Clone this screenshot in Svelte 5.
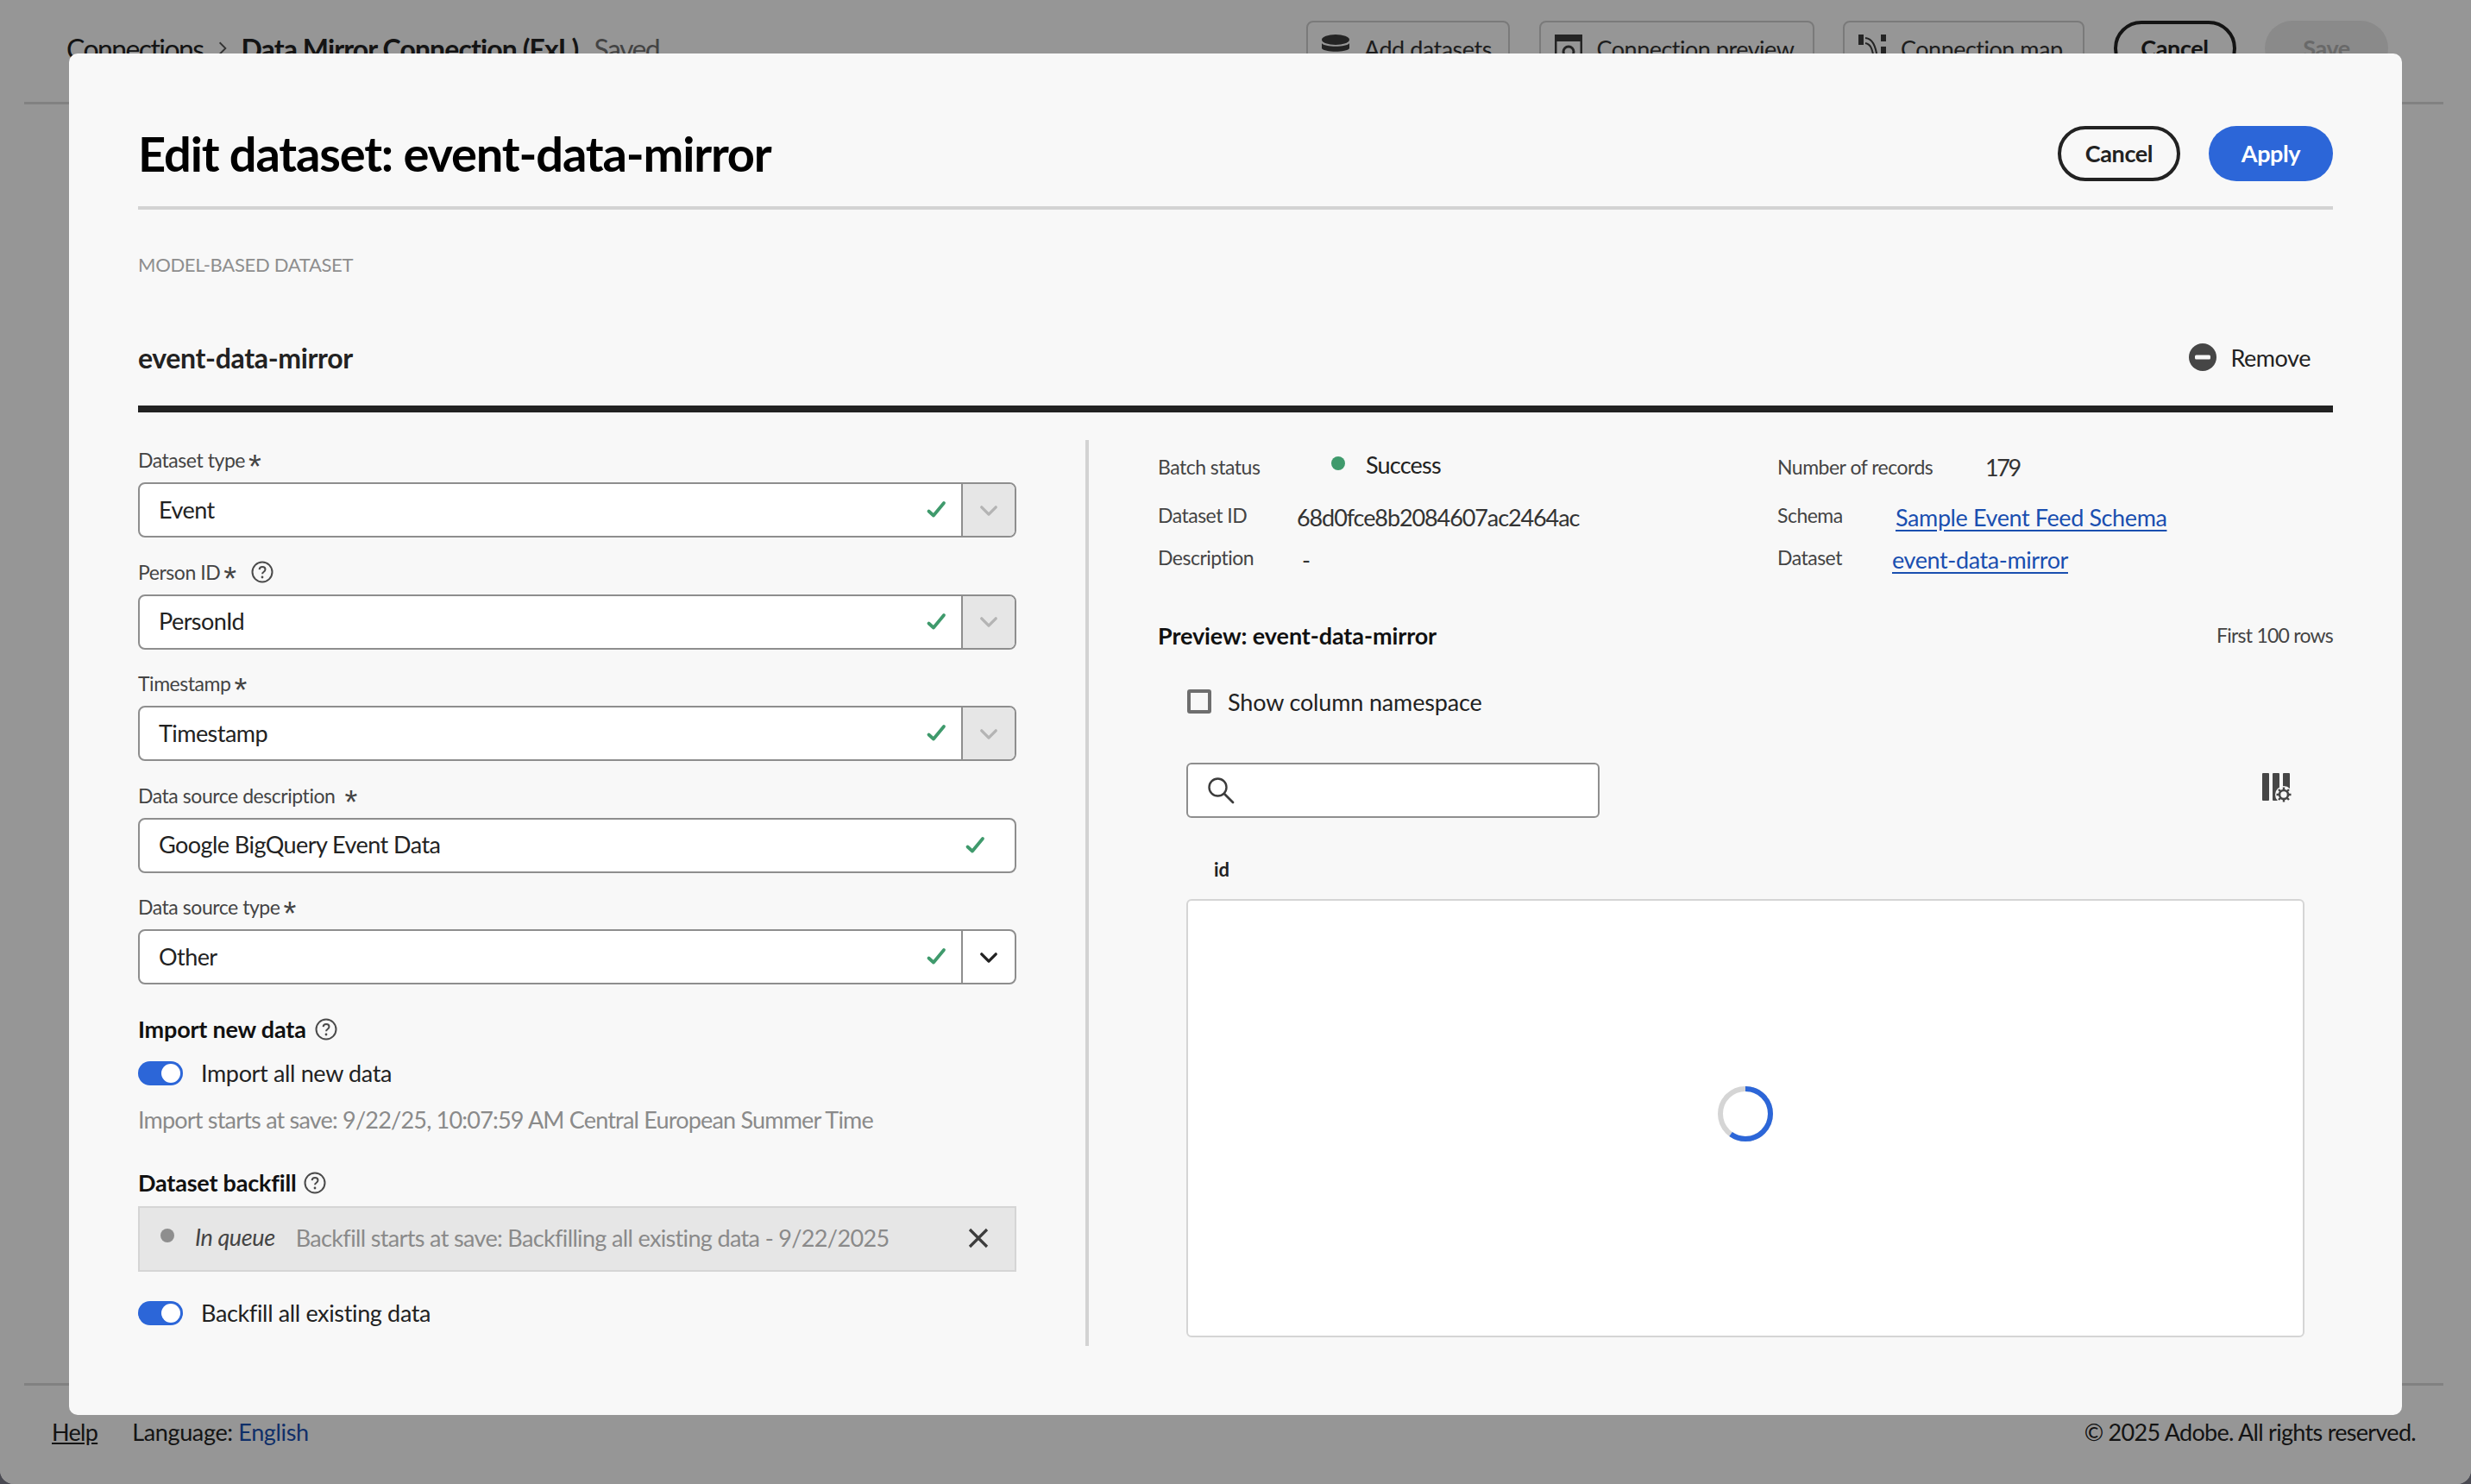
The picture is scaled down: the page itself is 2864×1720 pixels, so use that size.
<script>
	const fields = [
		{ label: 'Dataset type', value: 'Event', kind: 'locked' },
		{ label: 'Person ID', value: 'PersonId', kind: 'locked', help: true },
		{ label: 'Timestamp', value: 'Timestamp', kind: 'locked' },
		{ label: 'Data source description', value: 'Google BigQuery Event Data', kind: 'text', wide: true },
		{ label: 'Data source type', value: 'Other', kind: 'open' }
	];
</script>

{#snippet helpIcon()}
	<svg class="help" viewBox="0 0 26 26" aria-hidden="true">
		<circle cx="13" cy="13" r="11.5" fill="none" stroke="#4b4b4b" stroke-width="2" />
		<path d="M9.6 10.2c.2-2 1.6-3.1 3.5-3.1 2 0 3.4 1.2 3.4 2.9 0 1.5-.9 2.2-2 3-.9.6-1.4 1.1-1.4 2.2" fill="none" stroke="#4b4b4b" stroke-width="2" />
		<circle cx="13" cy="19" r="1.4" fill="#4b4b4b" />
	</svg>
{/snippet}

{#snippet check()}
	<svg class="check" viewBox="0 0 24 24" aria-hidden="true">
		<path d="M3.5 13.5 9 18.5 21 4" fill="none" stroke="#3f9a6c" stroke-width="3.8" stroke-linecap="round" stroke-linejoin="round" />
	</svg>
{/snippet}

{#snippet chevron()}
	<svg class="chevron" viewBox="0 0 24 16" aria-hidden="true">
		<path d="M3 4l9 9 9-9" fill="none" stroke="currentColor" stroke-width="3.6" stroke-linecap="round" stroke-linejoin="round" />
	</svg>
{/snippet}

{#snippet toggle(text)}
	<div class="switch-row">
		<span class="switch"><span class="knob"></span></span>
		<span class="switch-text">{text}</span>
	</div>
{/snippet}

<div class="window">
	<header class="page-head">
		<div class="crumbs">
			<span class="crumb-root">Connections</span>
			<svg class="crumb-sep" viewBox="0 0 10 16" aria-hidden="true"><path d="M2 2l6 6-6 6" fill="none" stroke="#555" stroke-width="1.6" /></svg>
			<strong>Data Mirror Connection (ExL)</strong>
			<span class="saved">Saved</span>
		</div>
		<div class="page-actions">
			<button class="ghost add">
				<svg viewBox="0 0 32 32" aria-hidden="true">
					<ellipse cx="16" cy="6" rx="16" ry="6" fill="#3c3c3c" />
					<path d="M0 10c3 5 29 5 32 0v6c-3 5-29 5-32 0z" fill="#3c3c3c" />
				</svg>
				Add datasets
			</button>
			<button class="ghost preview">
				<svg viewBox="0 0 32 32" aria-hidden="true">
					<path d="M1 1h30v30H1z" fill="none" stroke="#3c3c3c" stroke-width="3" />
					<path d="M1 1h30v7H1z" fill="#3c3c3c" />
					<circle cx="16" cy="20" r="6" fill="none" stroke="#3c3c3c" stroke-width="3" />
				</svg>
				Connection preview
			</button>
			<button class="ghost map">
				<svg viewBox="0 0 32 32" aria-hidden="true">
					<path d="M0 0h6v12H0zM26 0h6v8h-6zM26 14h6v8h-6z" fill="#3c3c3c" />
					<path d="M8 4c8 1 12 8 14 24M8 10c6 1 8 6 10 18" fill="none" stroke="#3c3c3c" stroke-width="2" />
				</svg>
				Connection map
			</button>
			<button class="outline dim">Cancel</button>
			<button class="save">Save</button>
		</div>
	</header>

	<div class="page-body"></div>

	<footer class="page-foot">
		<div class="foot-left">
			<span class="help-link">Help</span>
			<span class="lang-row">Language: <span class="lang">English</span></span>
		</div>
		<span>© 2025 Adobe. All rights reserved.</span>
	</footer>

	<div class="scrim"></div>

	<section class="modal">
		<div class="modal-head">
			<h1>Edit dataset: event-data-mirror</h1>
			<div class="modal-actions">
				<button class="outline cancel">Cancel</button>
				<button class="primary">Apply</button>
			</div>
		</div>

		<div class="eyebrow">MODEL-BASED DATASET</div>

		<div class="dataset-head">
			<h2>event-data-mirror</h2>
			<div class="remove">
				<svg viewBox="0 0 32 32" aria-hidden="true">
					<circle cx="16" cy="16" r="16" fill="#464646" />
					<rect x="7" y="13.5" width="18" height="5" rx="1.5" fill="#f8f8f8" />
				</svg>
				<span>Remove</span>
			</div>
		</div>

		<div class="columns">
			<div class="form">
				{#each fields as field}
					<div class="field">
						<div class="field-label">
							<span>{field.label}</span>
							<span class="star" class:spaced={field.wide}>*</span>
							{#if field.help}
								<span class="label-help">{@render helpIcon()}</span>
							{/if}
						</div>
						<div class="combo">
							<span class="combo-value">{field.value}</span>
							<span class="combo-check" class:flush={field.kind === 'text'}>{@render check()}</span>
							{#if field.kind !== 'text'}
								<span class="combo-btn" class:locked={field.kind === 'locked'}>{@render chevron()}</span>
							{/if}
						</div>
					</div>
				{/each}

				<div class="sub-head import-head">Import new data {@render helpIcon()}</div>
				{@render toggle('Import all new data')}
				<div class="hint">Import starts at save: 9/22/25, 10:07:59 AM Central European Summer Time</div>

				<div class="sub-head backfill-head">Dataset backfill {@render helpIcon()}</div>
				<div class="queue">
					<span class="queue-dot"></span>
					<em>In queue</em>
					<span class="queue-text">Backfill starts at save: Backfilling all existing data - 9/22/2025</span>
					<svg class="queue-x" viewBox="0 0 24 24" aria-hidden="true">
						<path d="M2 2l20 20M22 2 2 22" fill="none" stroke="#3c3c3c" stroke-width="3.2" />
					</svg>
				</div>
				<div class="last-toggle">{@render toggle('Backfill all existing data')}</div>
			</div>

			<div class="detail">
				<div class="meta">
					<div class="meta-row one">
						<div class="cell">
							<span class="key batch">Batch status</span>
							<span class="status-dot"></span>
							<span class="success">Success</span>
						</div>
						<div class="cell">
							<span class="key records">Number of records</span>
							<span class="val count">179</span>
						</div>
					</div>
					<div class="meta-row two">
						<div class="cell">
							<span class="key id-key">Dataset ID</span>
							<span class="val">68d0fce8b2084607ac2464ac</span>
						</div>
						<div class="cell">
							<span class="key schema-key">Schema</span>
							<span class="link">Sample Event Feed Schema</span>
						</div>
					</div>
					<div class="meta-row three">
						<div class="cell">
							<span class="key desc-key">Description</span>
							<span class="val">-</span>
						</div>
						<div class="cell">
							<span class="key set-key">Dataset</span>
							<span class="link">event-data-mirror</span>
						</div>
					</div>
				</div>

				<div class="preview-head">
					<strong>Preview: event-data-mirror</strong>
					<span>First 100 rows</span>
				</div>

				<div class="preview-body">
					<div class="namespace">
						<span class="checkbox"></span>
						<span>Show column namespace</span>
					</div>

					<div class="tools">
						<div class="search">
							<svg viewBox="0 0 32 32" aria-hidden="true">
								<circle cx="12.5" cy="12.5" r="10" fill="none" stroke="#3c3c3c" stroke-width="2.4" />
								<path d="M20 20l10 10" stroke="#3c3c3c" stroke-width="2.8" stroke-linecap="round" />
							</svg>
						</div>
						<svg class="columns-icon" viewBox="0 0 34 32" aria-hidden="true">
							<rect x="0" y="0" width="8" height="32" rx="1" fill="#464646" />
							<rect x="12" y="0" width="8" height="32" rx="1" fill="#464646" />
							<rect x="24" y="0" width="8" height="32" rx="1" fill="#464646" />
							<circle cx="25" cy="25" r="10" fill="#f8f8f8" />
							<circle cx="25" cy="25" r="5" fill="none" stroke="#464646" stroke-width="2.6" />
							<path d="M25 16.5v3.5M25 30v3.5M16.5 25H20M30 25h3.5M19 19l2.4 2.4M28.6 28.6l2.4 2.4M31 19l-2.4 2.4M21.4 28.6 19 31" stroke="#464646" stroke-width="2.4" />
						</svg>
					</div>

					<div class="col-name">id</div>

					<div class="table">
						<svg class="spinner" viewBox="0 0 64 64" aria-hidden="true">
							<circle cx="32" cy="32" r="29" fill="none" stroke="#d5d5d5" stroke-width="6" />
							<circle cx="32" cy="32" r="29" fill="none" stroke="#2c66d8" stroke-width="6" stroke-dasharray="109 200" transform="rotate(-90 32 32)" />
						</svg>
					</div>
				</div>
			</div>
		</div>
	</section>
</div>

<style>
	:global(body) {
		margin: 0;
		background: #4a4a52;
	}

	.window {
		position: relative;
		width: 2864px;
		height: 1720px;
		background: #fafafa;
		border-radius: 0 0 16px 16px;
		overflow: hidden;
		font-family: Lato, 'Liberation Sans', sans-serif;
		font-size: 27px;
		letter-spacing: -0.7px;
		color: #222;
		display: flex;
		flex-direction: column;
	}

	button {
		font: inherit;
		letter-spacing: -0.4px;
		height: 64px;
		box-sizing: border-box;
		border-radius: 32px;
		display: flex;
		align-items: center;
		justify-content: center;
		padding: 0 0 2px;
	}

	/* page behind the dialog */
	.page-head {
		height: 121px;
		box-sizing: border-box;
		margin: 0 32px 0 28px;
		padding: 24px 64px 0 49px;
		border-bottom: 3px solid #d8d8d8;
		display: flex;
		justify-content: space-between;
	}

	.crumbs {
		display: flex;
		align-items: center;
		align-self: flex-start;
		height: 64px;
		gap: 14px;
		font-size: 32px;
		letter-spacing: -0.9px;
	}

	.crumb-root {
		letter-spacing: -1.6px;
	}

	.crumb-sep {
		width: 12px;
		height: 18px;
		margin: 0 2px;
	}

	.saved {
		color: #707070;
		margin-left: 4px;
		letter-spacing: -1.6px;
	}

	.page-actions {
		display: flex;
		gap: 33.5px;
	}

	.ghost {
		background: transparent;
		border: 2px solid #ccc;
		border-radius: 8px;
		gap: 17px;
		color: #333;
		justify-content: flex-start;
		padding: 0 0 0 16px;
		letter-spacing: -0.5px;
	}

	.ghost svg {
		width: 32px;
		height: 32px;
	}

	.add {
		width: 236px;
	}

	.preview {
		width: 319px;
	}

	.map {
		width: 280px;
	}

	.outline {
		background: transparent;
		border: 4px solid #222;
		width: 142px;
		font-weight: 700;
		color: #222;
	}

	.save {
		width: 143px;
		background: #e6e6e6;
		border: none;
		color: #b0b0b0;
		font-weight: 700;
	}

	.page-body {
		flex: 1;
	}

	.page-foot {
		margin: 0 32px 0 28px;
		border-top: 3px solid #d8d8d8;
		height: 117px;
		box-sizing: border-box;
		padding: 36px 32px 0 32px;
		display: flex;
		justify-content: space-between;
		align-items: flex-start;
		line-height: 36px;
	}

	.foot-left {
		display: flex;
		gap: 40px;
	}

	.help-link {
		text-decoration: underline;
	}

	.lang-row {
		letter-spacing: -0.35px;
	}

	.lang {
		color: #1a4fb0;
	}

	.scrim {
		position: absolute;
		inset: 0;
		background: rgba(0, 0, 0, 0.4);
	}

	/* dialog */
	.modal {
		position: absolute;
		left: 80px;
		top: 62px;
		width: 2704px;
		height: 1578px;
		box-sizing: border-box;
		padding: 0 80px;
		background: #f8f8f8;
		border-radius: 10px;
	}

	.modal-head {
		height: 181px;
		box-sizing: border-box;
		padding-top: 84px;
		border-bottom: 4px solid #d3d3d3;
		display: flex;
		justify-content: space-between;
		align-items: flex-start;
	}

	h1 {
		margin: 0;
		font-size: 56px;
		line-height: 64px;
		font-weight: 700;
		letter-spacing: -1.16px;
		color: #000;
	}

	.modal-actions {
		display: flex;
		gap: 33px;
	}

	.primary {
		width: 144px;
		background: #2c66d8;
		border: none;
		color: #fff;
		font-weight: 700;
	}

	.eyebrow {
		margin-top: 48px;
		font-size: 22px;
		letter-spacing: -0.3px;
		line-height: 32px;
		color: #8e8e8e;
	}

	.dataset-head {
		margin-top: 61px;
		height: 64px;
		box-sizing: border-box;
		display: flex;
		justify-content: space-between;
		align-items: center;
	}

	h2 {
		margin: 0 0 4px;
		font-size: 32px;
		font-weight: 700;
		letter-spacing: -0.35px;
		color: #222;
	}

	.remove {
		display: flex;
		align-items: center;
		gap: 16px;
		padding: 0 26px 4px 0;
		letter-spacing: -0.45px;
	}

	.remove svg {
		width: 32px;
		height: 32px;
	}

	.columns {
		border-top: 8px solid #222;
		margin-top: 22px;
		display: flex;
		padding-top: 32px;
		align-items: flex-start;
	}

	.form {
		width: 1018px;
		flex: none;
	}

	.field {
		margin-bottom: 23.5px;
	}

	.field-label {
		height: 36px;
		box-sizing: border-box;
		padding-bottom: 3px;
		margin-top: 7px;
		line-height: 33px;
		font-size: 23px;
		letter-spacing: -0.45px;
		color: #444;
		display: flex;
		align-items: center;
		gap: 4px;
	}

	.star {
		font-family: 'Liberation Sans', sans-serif;
		font-size: 38px;
		line-height: 33px;
		height: 33px;
		letter-spacing: 0;
		transform: translateY(8px);
	}

	.star.spaced {
		margin-left: 7px;
	}

	.label-help {
		display: flex;
		margin-left: 13px;
	}

	.help {
		width: 26px;
		height: 26px;
		flex: none;
	}

	.combo {
		height: 64px;
		box-sizing: border-box;
		margin-top: 6px;
		border: 2px solid #8e8e8e;
		border-radius: 8px;
		background: #fff;
		display: flex;
		align-items: center;
		padding-left: 22px;
		overflow: hidden;
		letter-spacing: -0.55px;
	}

	.combo-value {
		flex: 1;
		margin-top: -2px;
	}

	.combo-check {
		display: flex;
		margin-right: 17px;
	}

	.combo-check.flush {
		margin-right: 34px;
	}

	.check {
		width: 24px;
		height: 24px;
	}

	.combo-btn {
		width: 62px;
		height: 100%;
		box-sizing: border-box;
		border-left: 2px solid #8e8e8e;
		display: flex;
		align-items: center;
		justify-content: center;
		color: #222;
	}

	.combo-btn.locked {
		background: #e6e6e6;
		color: #b4b4b4;
	}

	.chevron {
		width: 22px;
		height: 15px;
	}

	.sub-head {
		display: flex;
		align-items: center;
		gap: 10px;
		font-weight: 700;
		letter-spacing: -0.2px;
		line-height: 32px;
		height: 36px;
		color: #111;
	}

	.import-head {
		margin-top: 34px;
	}

	.switch-row {
		display: flex;
		align-items: center;
		gap: 21px;
		height: 36px;
		margin-top: 15px;
		letter-spacing: -0.35px;
	}

	.switch-text {
		margin-top: -2px;
	}

	.switch {
		width: 52px;
		height: 28px;
		border-radius: 14px;
		background: #2c66d8;
		position: relative;
		flex: none;
	}

	.knob {
		position: absolute;
		right: 3px;
		top: 3px;
		width: 22px;
		height: 22px;
		border-radius: 50%;
		background: #fff;
	}

	.hint {
		margin-top: 18px;
		line-height: 36px;
		letter-spacing: -0.8px;
		color: #8a8a8a;
	}

	.backfill-head {
		margin-top: 37px;
		gap: 9px;
	}

	.queue {
		margin-top: 9px;
		height: 76px;
		box-sizing: border-box;
		border: 2px solid #d5d5d5;
		background: #e6e6e6;
		display: flex;
		align-items: center;
		padding-left: 24px;
	}

	.queue-dot {
		width: 16px;
		height: 16px;
		border-radius: 50%;
		background: #8e8e8e;
		margin-top: -8px;
	}

	.queue em {
		margin-left: 24px;
		letter-spacing: -0.4px;
		color: #444;
		margin-top: -6px;
	}

	.queue-text {
		margin-left: 24px;
		margin-top: -3px;
		flex: 1;
		letter-spacing: -0.65px;
		color: #8a8a8a;
	}

	.queue-x {
		width: 24px;
		height: 24px;
		margin: -2px 30px 0 0;
	}

	.last-toggle {
		margin-top: 30px;
	}

	.last-toggle .switch-row {
		margin-top: 0;
	}

	.detail {
		flex: 1;
		min-width: 0;
		height: 1050px;
		box-sizing: border-box;
		margin-left: 80px;
		border-left: 4px solid #d3d3d3;
		padding-left: 80px;
	}

	.meta {
		font-size: 23px;
		letter-spacing: -0.5px;
	}

	.meta-row {
		display: grid;
		grid-template-columns: 718px 1fr;
		align-items: center;
		height: 36px;
	}

	.meta-row.one {
		margin-top: 13px;
	}

	.meta-row.two {
		margin-top: 22px;
	}

	.meta-row.three {
		margin-top: 13px;
	}

	.cell {
		display: flex;
		align-items: center;
	}

	.key {
		color: #444;
		flex: none;
	}

	.two .key,
	.three .key {
		margin-top: -4px;
	}

	.batch {
		width: 201px;
	}

	.records {
		width: 241px;
	}

	.id-key {
		width: 161px;
	}

	.schema-key {
		width: 137px;
	}

	.desc-key {
		width: 167px;
	}

	.set-key {
		width: 133px;
	}

	.status-dot {
		width: 16px;
		height: 16px;
		border-radius: 50%;
		background: #3f9a6c;
		margin-right: 24px;
		margin-top: -8px;
	}

	.success {
		font-size: 27px;
		letter-spacing: -0.8px;
		margin-top: -6px;
	}

	.val {
		font-size: 27px;
		letter-spacing: -1.1px;
		color: #333;
	}

	.val.count {
		letter-spacing: -2.4px;
	}

	.link {
		font-size: 27px;
		letter-spacing: -0.4px;
		color: #1a4fb0;
		text-decoration: underline;
		text-underline-offset: 4px;
	}

	.preview-head {
		display: flex;
		justify-content: space-between;
		align-items: center;
		margin-top: 52px;
		height: 36px;
		font-size: 23px;
		letter-spacing: -0.75px;
		color: #444;
	}

	.preview-head strong {
		font-size: 27px;
		letter-spacing: -0.1px;
		color: #111;
	}

	.preview-body {
		padding: 0 33px 0 33px;
	}

	.namespace {
		display: flex;
		align-items: center;
		gap: 19px;
		margin-top: 41px;
		height: 36px;
		letter-spacing: -0.15px;
	}

	.checkbox {
		width: 28px;
		height: 28px;
		box-sizing: border-box;
		border: 4px solid #6e6e6e;
		border-radius: 3px;
		margin-left: 1px;
	}

	.tools {
		display: flex;
		justify-content: space-between;
		align-items: center;
		margin-top: 53px;
	}

	.search {
		width: 479px;
		height: 64px;
		box-sizing: border-box;
		border: 2px solid #8e8e8e;
		border-radius: 6px;
		background: #fff;
		display: flex;
		align-items: center;
		padding-left: 22px;
	}

	.search svg {
		width: 32px;
		height: 32px;
	}

	.columns-icon {
		width: 34px;
		height: 32px;
		margin: -8px 15px 0 0;
		overflow: visible;
	}

	.col-name {
		margin: 44px 0 0 32px;
		font-size: 22px;
		font-weight: 700;
		letter-spacing: 0;
		line-height: 32px;
		color: #222;
	}

	.table {
		margin-top: 18px;
		height: 508px;
		box-sizing: border-box;
		padding-bottom: 10px;
		border: 2px solid #d5d5d5;
		border-radius: 6px;
		background: #fff;
		display: flex;
		align-items: center;
		justify-content: center;
	}

	.spinner {
		width: 64px;
		height: 64px;
	}
</style>
